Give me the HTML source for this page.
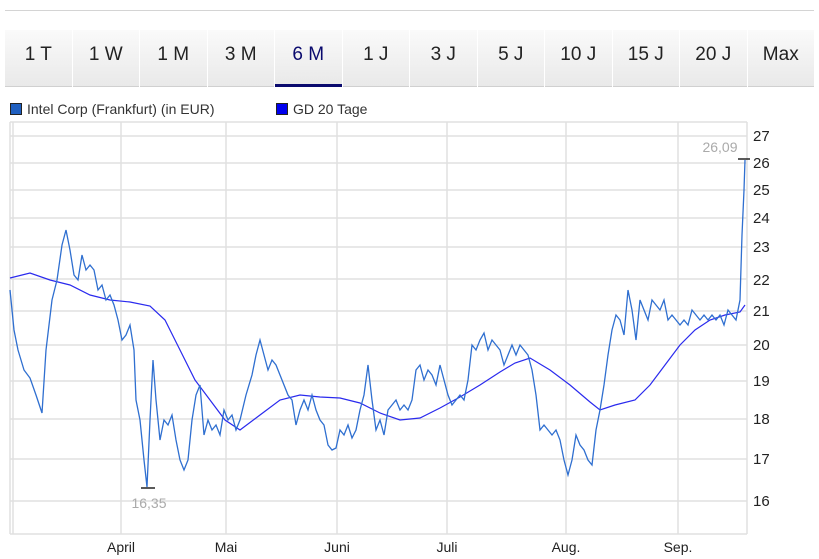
<!DOCTYPE html>
<html><head><meta charset="utf-8"><style>
body{margin:0;width:819px;height:559px;background:#fff;font-family:"Liberation Sans",sans-serif;position:relative;overflow:hidden}
.top{position:absolute;left:5px;right:5px;top:10px;height:1px;background:#d4d4d4}
.tabs{position:absolute;left:5px;top:30px;width:810px;height:58px;display:flex}
.tab{flex:1;margin-right:1px;background:linear-gradient(#fafafa,#e9e9e9);border-bottom:1px solid #d0d0d0;display:flex;align-items:center;justify-content:center;font-size:19px;color:#222;box-sizing:border-box;height:57px;padding-bottom:6px}
.tab.on{border-bottom:3px solid #0a0a6e;color:#0a0a6e;padding-bottom:4px}
.leg{position:absolute;top:101px;font-size:14px;color:#333}
.sq{display:inline-block;width:10px;height:10px;border:1px solid #222;vertical-align:-1px;margin-right:5px}
</style></head><body>
<div class="top"></div>
<div class="tabs">
<div class="tab">1 T</div><div class="tab">1 W</div><div class="tab">1 M</div><div class="tab">3 M</div><div class="tab on">6 M</div><div class="tab">1 J</div><div class="tab">3 J</div><div class="tab">5 J</div><div class="tab">10 J</div><div class="tab">15 J</div><div class="tab">20 J</div><div class="tab">Max</div>
</div>
<div class="leg" style="left:10px"><span class="sq" style="background:#1f5fc0"></span>Intel Corp (Frankfurt) (in EUR)</div>
<div class="leg" style="left:276px"><span class="sq" style="background:#0000ee"></span>GD 20 Tage</div>
<svg width="819" height="559" style="position:absolute;left:0;top:0" font-family="Liberation Sans, sans-serif">
<g stroke="#e0e0e0" stroke-width="1.5" fill="none">
<line x1="10" y1="122" x2="747" y2="122"/>
<line x1="10" y1="136" x2="747" y2="136"/><line x1="10" y1="163" x2="747" y2="163"/><line x1="10" y1="190" x2="747" y2="190"/><line x1="10" y1="218" x2="747" y2="218"/><line x1="10" y1="247" x2="747" y2="247"/><line x1="10" y1="279" x2="747" y2="279"/><line x1="10" y1="311" x2="747" y2="311"/><line x1="10" y1="345" x2="747" y2="345"/><line x1="10" y1="381" x2="747" y2="381"/><line x1="10" y1="419" x2="747" y2="419"/><line x1="10" y1="459" x2="747" y2="459"/><line x1="10" y1="501" x2="747" y2="501"/><line x1="10" y1="534" x2="747" y2="534"/>
<line x1="10" y1="122" x2="10" y2="534"/><line x1="13" y1="122" x2="13" y2="534"/>
<line x1="121" y1="122" x2="121" y2="534"/><line x1="226" y1="122" x2="226" y2="534"/><line x1="337" y1="122" x2="337" y2="534"/><line x1="447" y1="122" x2="447" y2="534"/><line x1="566" y1="122" x2="566" y2="534"/><line x1="678" y1="122" x2="678" y2="534"/><line x1="747" y1="122" x2="747" y2="534"/>
</g>
<polyline fill="none" stroke="#2a2aee" stroke-width="1.2" points="10,278 30,273 50,280 70,285 90,295 110,300 130,302 150,306 165,320 180,350 195,380 210,400 225,420 240,430 260,415 280,400 300,395 320,397 340,398 360,403 380,413 400,420 420,418 440,408 460,397 480,385 500,372 515,363 530,358 550,370 570,385 590,402 600,410 615,405 635,400 650,385 665,365 680,345 695,330 710,320 725,315 740,312 745,305"/>
<polyline fill="none" stroke="#2f6fd0" stroke-width="1.3" points="10,290 14,330 18,350 24,370 30,378 36,395 42,413 46,350 52,300 57,280 62,245 66,230 70,250 74,275 78,280 82,255 86,270 90,265 94,270 98,290 102,285 106,300 110,295 114,305 118,320 122,340 126,335 130,325 134,350 136,400 140,420 144,460 147,487 150,420 153,360 156,400 160,440 164,420 168,425 172,415 176,440 180,460 184,470 188,460 192,420 196,395 200,385 204,435 208,420 212,430 216,425 220,435 224,410 228,420 232,415 236,430 240,420 246,395 252,375 256,355 260,340 264,355 268,370 272,360 276,365 280,375 284,385 288,395 292,400 296,425 300,410 304,400 308,410 312,395 316,410 320,420 324,425 328,445 332,450 336,448 340,430 344,435 348,425 352,438 356,430 360,410 364,395 368,365 372,400 376,430 380,420 384,435 388,410 392,405 396,400 400,410 404,405 408,410 412,400 416,370 420,365 424,380 428,370 432,375 436,385 440,365 444,380 448,395 452,405 456,400 460,395 464,400 468,380 472,345 476,350 480,340 484,333 488,350 492,340 496,345 500,350 504,365 508,355 512,345 516,355 520,345 524,350 528,355 532,370 536,395 540,430 544,425 548,430 552,435 556,430 560,440 564,460 568,475 572,460 576,435 580,445 584,450 588,460 592,465 596,430 600,410 604,385 608,355 612,330 616,315 620,320 624,335 628,290 632,310 636,340 640,300 644,310 648,320 652,300 656,305 660,310 664,300 668,320 672,315 676,320 680,325 684,320 688,325 692,310 696,315 700,320 704,315 708,320 712,315 716,320 720,315 724,325 728,310 732,315 736,320 740,300 742,235 744,190 745,160"/>
<line x1="141" y1="488" x2="155" y2="488" stroke="#222" stroke-width="1.5"/>
<line x1="738" y1="159" x2="750" y2="159" stroke="#222" stroke-width="1.5"/>
<text x="149" y="508" font-size="14" fill="#aaa" text-anchor="middle">16,35</text>
<text x="720" y="152" font-size="14" fill="#aaa" text-anchor="middle">26,09</text>
<g font-size="15" fill="#222">
<text x="753" y="141">27</text><text x="753" y="168">26</text><text x="753" y="195">25</text><text x="753" y="223">24</text><text x="753" y="252">23</text><text x="753" y="285">22</text><text x="753" y="316">21</text><text x="753" y="350">20</text><text x="753" y="386">19</text><text x="753" y="424">18</text><text x="753" y="464">17</text><text x="753" y="506">16</text>
</g>
<g font-size="14" fill="#222" text-anchor="middle">
<text x="121" y="552">April</text><text x="226" y="552">Mai</text><text x="337" y="552">Juni</text><text x="447" y="552">Juli</text><text x="566" y="552">Aug.</text><text x="678" y="552">Sep.</text>
</g>
</svg>
</body></html>
